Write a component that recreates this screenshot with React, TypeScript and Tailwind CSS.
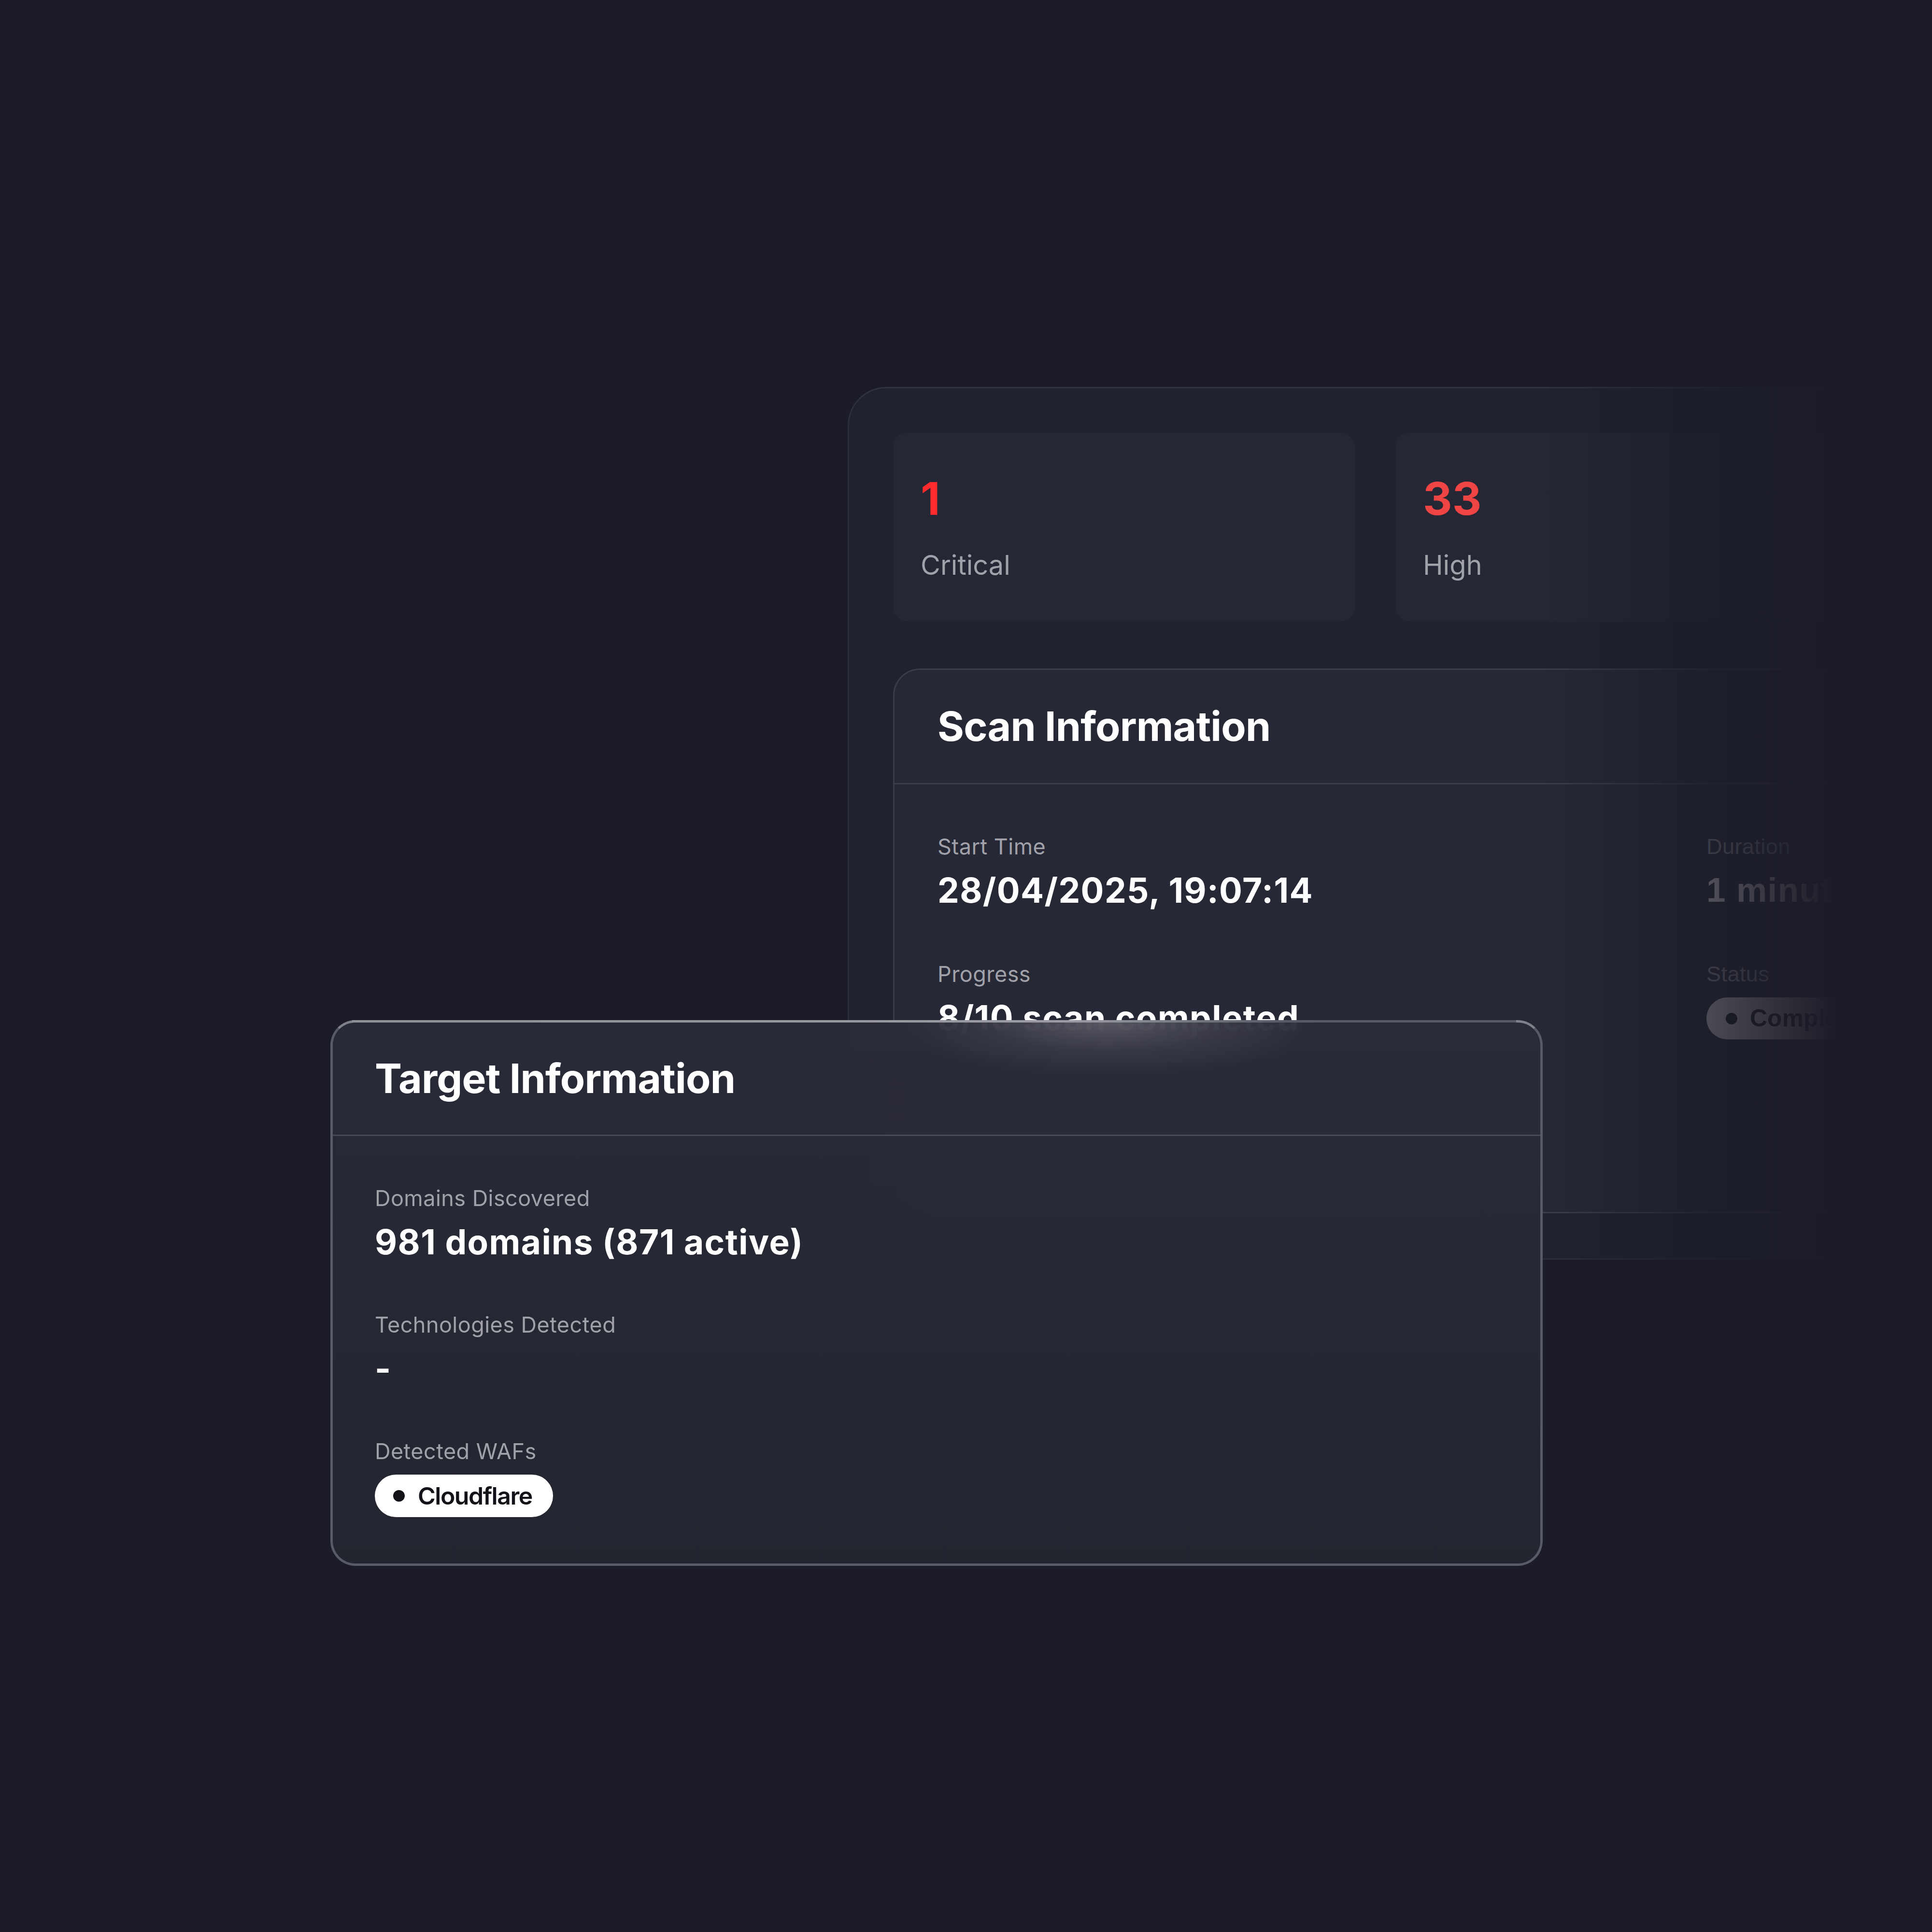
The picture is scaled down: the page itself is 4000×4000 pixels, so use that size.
function StatCard({ value, label, color }: { value: string; label: string; color: string }) {
  return (
    <div className="w-[957px] h-[391px] shrink-0 rounded-[30px] bg-[#252734] pl-[57px] pt-[89px]">
      <div className={`text-[94px] leading-[94px] font-bold ${color}`}>{value}</div>
      <div className="mt-[63px] text-[56px] leading-[56px] text-[#a1a1aa]">{label}</div>
    </div>
  );
}

function Field({ label, children }: { label: string; children: React.ReactNode }) {
  return (
    <div>
      <div className="text-[45px] leading-[56px] text-[#a1a1aa] tracking-[0.01em]">{label}</div>
      <div className="mt-[20px]">{children}</div>
    </div>
  );
}

function Value({ children }: { children: React.ReactNode }) {
  return <div className="text-[71px] leading-[84px] font-bold text-white tracking-[0.02em]">{children}</div>;
}

export default function App() {
  return (
    <div className="relative w-[4000px] h-[4000px] overflow-hidden bg-[#1b1c27] font-['Inter',sans-serif]">
      {/* back panel */}
      <div className="ml-[1755px] mt-[801px] w-[2600px] rounded-[80px] border-[3px] border-[#2c2e3a] border-t-[#30323e] bg-[#20222e] px-[91px] pt-[92px] pb-[93px]">
        <div className="flex gap-[83px]">
          <StatCard value="1" label="Critical" color="text-[#ff2a2e]" />
          <StatCard value="33" label="High" color="text-[#ef4444]" />
        </div>

        <div className="mt-[97px] w-[2300px] h-[1128px] rounded-[56px] border-[3px] border-[#3a3c48] bg-[#262836]">
          <div className="h-[237px] flex items-center px-[89px] border-b-[3px] border-[#3a3c48]">
            <h2 className="text-[84px] font-bold text-white tracking-[-0.01em]">Scan Information</h2>
          </div>
          <div className="grid grid-cols-[1592px_1fr] px-[89px] pt-[101px]">
            <div className="flex flex-col gap-[104px]">
              <Field label="Start Time">
                <Value>28/04/2025, 19:07:14</Value>
              </Field>
              <Field label="Progress">
                <Value>8/10 scan completed</Value>
              </Field>
            </div>
            <div className="flex flex-col gap-[104px] font-['Liberation_Sans',sans-serif]">
              <Field label="Duration">
                <Value>1 minute</Value>
              </Field>
              <Field label="Status">
                <div className="inline-flex items-center h-[87px] rounded-full bg-[#e4e4e7] pl-[40px] pr-[44px] gap-[26px]">
                  <span className="w-[24px] h-[24px] rounded-full bg-[#111318]" />
                  <span className="text-[50px] font-bold text-[#111318]">Completed</span>
                </div>
              </Field>
            </div>
          </div>
        </div>
      </div>

      {/* right fade */}
      <div className="absolute left-[3196px] top-[760px] w-[804px] h-[1950px] bg-[linear-gradient(to_right,rgba(27,28,39,0)_0%,rgba(27,28,39,0.77)_42%,#1b1c27_75%)]" />

      {/* front card */}
      <div className="absolute left-[684px] top-[2112px] w-[2510px] h-[1130px] rounded-[52px] border-[5px] border-[#585a65] border-t-[#80818a] bg-[linear-gradient(180deg,rgba(43,44,57,0.94),rgba(35,37,48,0.96))] backdrop-blur-3xl">
        <div className="absolute top-[-5px] left-[40px] right-[50px] h-[5px] bg-[linear-gradient(to_right,#8d8e96_0%,#9b9ca3_62%,#585a65_80%,#585a65_100%)]" />
        <div className="absolute inset-0 rounded-[48px] bg-[radial-gradient(ellipse_440px_110px_at_1600px_0px,rgba(255,255,255,0.2),rgba(255,255,255,0.06)_55%,rgba(255,255,255,0)_100%)]" />
        <div className="relative h-[235px] flex items-center px-[87px] border-b-[3px] border-[#474955]">
          <h2 className="text-[84px] font-bold text-white tracking-[-0.01em]">Target Information</h2>
        </div>
        <div className="relative flex flex-col gap-[102px] px-[87px] pt-[101px]">
          <Field label="Domains Discovered">
            <Value>981 domains (871 active)</Value>
          </Field>
          <Field label="Technologies Detected">
            <Value>-</Value>
          </Field>
          <Field label="Detected WAFs">
            <div className="inline-flex items-center h-[88px] rounded-full bg-white pl-[38px] pr-[43px] gap-[27px]">
              <span className="w-[24px] h-[24px] rounded-full bg-[#111318]" />
              <span className="text-[50px] font-semibold text-[#111318] tracking-[-0.03em]">Cloudflare</span>
            </div>
          </Field>
        </div>
      </div>
    </div>
  );
}
